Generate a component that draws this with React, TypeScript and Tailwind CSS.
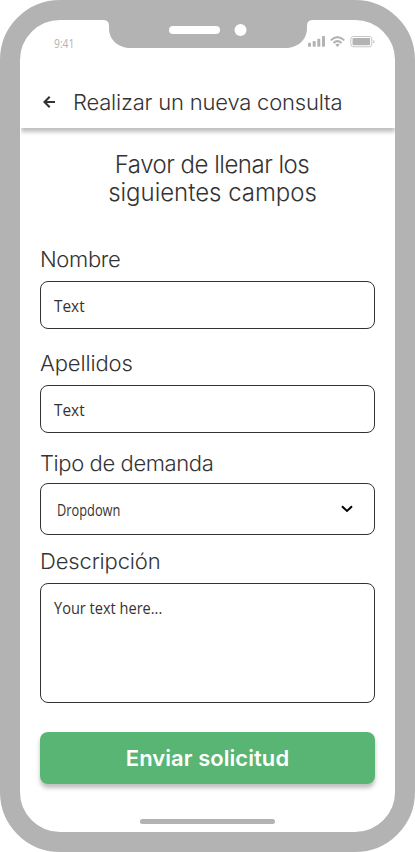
import type { ReactNode } from "react";

function Hand({ children, className }: { children: ReactNode; className: string }) {
  return (
    <span
      className={`block origin-left whitespace-nowrap font-['Open_Sans',sans-serif] text-[16px] font-medium leading-6 text-[#333333] ${className}`}
    >
      {children}
    </span>
  );
}

function Label({ children, className }: { children: ReactNode; className: string }) {
  return <label className={`block whitespace-nowrap text-[22px] font-light leading-[30px] ${className}`}>{children}</label>;
}

function StatusBar() {
  return (
    <div className="flex h-7 shrink-0">
      <div className="w-[83px] pl-[34px] pt-[14px]">
        <span className="block origin-left scale-x-[0.86] font-['Open_Sans',sans-serif] text-[12px] font-medium leading-5 text-[#b3b3b3]">
          9:41
        </span>
      </div>
      <svg className="block h-7 w-[210px] shrink-0" viewBox="103 20 210 28">
        <path d="M103 20C107 20 109 22 109 26V28C109 40 118 48 131 48H285C298 48 307 40 307 28V26C307 22 309 20 313 20Z" fill="#b3b3b3" />
        <rect x="169" y="26" width="51" height="8" rx="4" fill="#fff" />
        <circle cx="240.5" cy="30" r="6" fill="#fff" />
      </svg>
      <svg className="-ml-[5px] mt-[15px] block h-[13px] w-[68px] shrink-0" viewBox="308 35 68 13" fill="#b3b3b3">
        <rect x="308" y="42.7" width="3" height="4" rx="0.7" />
        <rect x="312.7" y="41" width="3" height="5.7" rx="0.7" />
        <rect x="317.3" y="38.7" width="3" height="8" rx="0.7" />
        <rect x="322" y="36" width="3" height="10.7" rx="0.7" />
        <g fill="none" stroke="#b3b3b3" strokeWidth="2">
          <path d="M330.7 40.4Q337.5 33.8 344.3 40.4" />
          <path d="M333.4 43Q337.5 39.2 341.6 43" />
        </g>
        <path d="M335.2 44.6Q337.5 42.7 339.8 44.6L337.5 47Z" />
        <rect x="350.8" y="36.5" width="21" height="10.3" rx="2.5" fill="none" stroke="#b3b3b3" strokeOpacity="0.75" />
        <rect x="352.5" y="38" width="17.6" height="7.3" rx="1" />
        <path d="M373 39.7C375.3 40.6 375.3 42.7 373 43.6Z" opacity="0.6" />
      </svg>
    </div>
  );
}

export default function App() {
  return (
    <div className="h-[852px] w-[415px] bg-white font-['Inter',sans-serif] text-[#333333]">
      <main className="flex h-[852px] w-[415px] flex-col rounded-[60px] border-[20px] border-[#b3b3b3] bg-white">
        <StatusBar />
        <header className="ml-px flex h-20 shrink-0 items-end pb-[11px] pl-[22px] shadow-[0_4px_4px_rgba(0,0,0,0.25)] [clip-path:inset(0_0_-8px_0)]">
          <button aria-label="Volver" className="mb-[9px] block">
            <svg className="block h-3 w-3" viewBox="0 0 12 12" fill="none" stroke="#333333" strokeWidth="2.1">
              <path d="M12 6H1.5M6.7 0.8L1.5 6L6.7 11.2" />
            </svg>
          </button>
          <h1 className="ml-[18px] whitespace-nowrap text-[22px] font-light leading-[30px] tracking-[-0.2px]">
            Realizar un nueva consulta
          </h1>
        </header>

        <h2 className="mt-[23px] flex flex-col items-center pl-[10px] text-[24px] font-light leading-7">
          <span className="-ml-px tracking-[-0.5px]">Favor de llenar los</span>
          <span className="tracking-[-0.02px]">siguientes campos</span>
        </h2>

        <form className="flex flex-col px-5 pt-[37px]">
          <Label className="tracking-[-0.35px]">Nombre</Label>
          <div className="mt-[7px] flex h-12 items-center rounded-lg border border-[#333333] px-[13px] pt-px">
            <Hand className="scale-x-[0.96]">Text</Hand>
          </div>
          <Label className="mt-[19px] tracking-[-0.12px]">Apellidos</Label>
          <div className="mt-[7px] flex h-12 items-center rounded-lg border border-[#333333] px-[13px] pt-px">
            <Hand className="scale-x-[0.96]">Text</Hand>
          </div>
          <Label className="mt-[15px] tracking-[-0.4px]">Tipo de demanda</Label>
          <div className="mt-[5px] flex h-[52px] items-center justify-between rounded-lg border border-[#333333] pl-4 pr-[21px]">
            <Hand className="mt-0.5 scale-x-[0.8]">Dropdown</Hand>
            <svg className="block h-3 w-3" viewBox="0 0 12 12" fill="none" stroke="#000" strokeWidth="2">
              <path d="M1 3.3L6 8L11 3.3" />
            </svg>
          </div>
          <Label className="mt-[11px] tracking-[-0.15px]">Descripción</Label>
          <div className="mt-[7px] h-[120px] rounded-lg border border-[#333333] px-[13px] pt-3">
            <Hand className="scale-x-[0.91]">Your text here...</Hand>
          </div>
          <button
            type="button"
            className="mt-[29px] flex h-[52px] items-center justify-center rounded-lg bg-[#59b573] text-[22px] font-semibold tracking-[0.05px] text-white shadow-[0_4px_4px_rgba(0,0,0,0.25)]"
          >
            Enviar solicitud
          </button>
        </form>
        <div className="mt-[35px] h-[5px] w-[135px] shrink-0 self-center rounded-full bg-[#b3b3b3]" />
      </main>
    </div>
  );
}
